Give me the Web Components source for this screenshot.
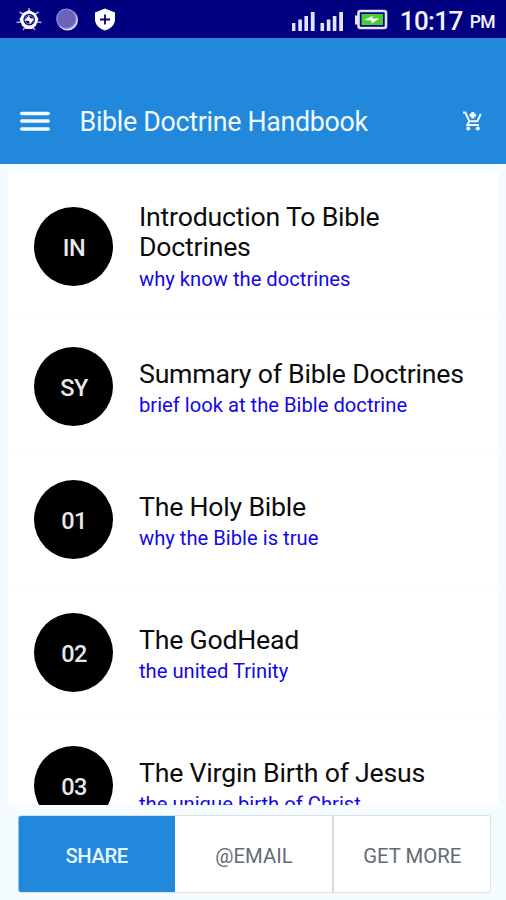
<!DOCTYPE html>
<html lang="en">
<head>
<meta charset="utf-8">
<title>Bible Doctrine Handbook</title>
<style>
  body {
    margin: 0;
    font-family: Roboto, sans-serif;
  }
</style>
</head>
<body>
<handbook-app>
  <status-bar slot="top" time="10:17" period="PM"></status-bar>
  <app-header slot="top">Bible Doctrine Handbook</app-header>
  <chapter-item badge="IN" tall>Introduction To Bible Doctrines<span slot="sub">why know the doctrines</span></chapter-item>
  <chapter-item badge="SY">Summary of Bible Doctrines<span slot="sub">brief look at the Bible doctrine</span></chapter-item>
  <chapter-item badge="01">The Holy Bible<span slot="sub">why the Bible is true</span></chapter-item>
  <chapter-item badge="02">The GodHead<span slot="sub">the united Trinity</span></chapter-item>
  <chapter-item badge="03">The Virgin Birth of Jesus<span slot="sub">the unique birth of Christ</span></chapter-item>
  <action-button slot="actions" active>SHARE</action-button>
  <action-button slot="actions">@EMAIL</action-button>
  <action-button slot="actions" divided>GET MORE</action-button>
</handbook-app>

<script>
class HandbookApp extends HTMLElement {
  constructor() {
    super();
    this.attachShadow({ mode: 'open' });
    this.shadowRoot.innerHTML = `
      <style>
        :host {
          display: flex;
          flex-direction: column;
          height: 900px;
          width: 506px;
          overflow: hidden;
          background: #f4fcff;
        }

        .list {
          flex: 1;
          min-height: 0;
          margin: 8px 7px 0 8px;
          overflow: hidden;
          background: #fff;
        }

        .actions {
          display: flex;
          box-sizing: border-box;
          height: 78px;
          margin: 10px 15px 7px 18px;
          border: 1px solid #dbe1e5;
          border-left-color: #8fc3ec;
          border-radius: 3px;
          overflow: hidden;
          background: #fff;
        }
      </style>
      <slot name="top"></slot>
      <div class="list"><slot></slot></div>
      <div class="actions"><slot name="actions"></slot></div>
    `;
  }
}

class StatusBar extends HTMLElement {
  constructor() {
    super();
    this.attachShadow({ mode: 'open' });
    this.shadowRoot.innerHTML = `
      <style>
        :host {
          display: flex;
          align-items: center;
          justify-content: space-between;
          box-sizing: border-box;
          height: 38px;
          flex: none;
          padding: 0 11px 0 16px;
          background: #000080;
          color: #f4f4ff;
        }

        svg {
          display: block;
        }

        .left, .right {
          display: flex;
          align-items: center;
        }

        .right {
          padding-top: 3px;
        }

        .clock {
          margin-left: 12px;
          font-size: 26px;
          font-weight: 500;
          letter-spacing: -0.6px;
          line-height: 30px;
          white-space: nowrap;
        }

        .period {
          margin: 3px 0 0 7px;
          font-size: 17.5px;
          font-weight: 500;
          letter-spacing: -0.6px;
        }
      </style>
      <div class="left">
        <svg width="102" height="38" viewBox="0 0 102 38">
          <g stroke="#a9a9e0" stroke-width="1.500">
            <path d="M13 8v4M3.500 12l4 2.500M22.500 12l-4 2.500M.5 22.500l5-.5M25.500 22.500l-5-.5M7 30l3-4M19 30l-3-4"/>
          </g>
          <path fill="#fff" d="M13 10l6 3 3.500 6-2.500 6.500-4 3.500H10l-4-3.500L3.500 19 7 13z"/>
          <circle cx="13.200" cy="19.600" r="5.800" fill="#000080"/>
          <circle cx="13.200" cy="19.600" r="4.200" fill="none" stroke="#8f8fd0" stroke-width="1"/>
          <path fill="#fff" d="M8.500 20.500l4.500-5 1 2.500 4 1-4 5-1-3z"/>
          <circle cx="51.500" cy="20" r="10.500" fill="#dcdcfa"/>
          <circle cx="50.400" cy="18.700" r="10" fill="#6a63b8"/>
          <circle cx="50.400" cy="18.700" r="9.600" fill="none" stroke="#8d88cf" stroke-width="1.300"/>
          <path fill="#fff" d="M89 8.500l10 4v7c0 5-4 9-10 11-6-2-10-6-10-11v-7z"/>
          <path stroke="#000080" stroke-width="1.800" d="M89 14.500v10M84 19.500h10"/>
        </svg>
      </div>
      <div class="right">
        <svg width="97" height="30" viewBox="0 0 97 30">
          <g fill="#e4e4ff">
            <path d="M1 17h3.400v8H1zM7.300 13.500h3.600v11.500H7.300zM13.400 10h3.600v15h-3.600zM19.800 6h3.800v19h-3.800z"/>
            <path d="M29.500 17h3.600v8h-3.600zM35.800 13.500h3.600v11.500h-3.600zM41.800 10h3.600v15h-3.600zM48.200 6h3.800v19h-3.800z"/>
          </g>
          <rect x="67.500" y="5" width="27.500" height="17" rx="2" fill="none" stroke="#e4e4ff" stroke-width="2.600"/>
          <path fill="#e4e4ff" d="M64 9.500h3v9h-3z"/>
          <rect x="70.500" y="8" width="21.500" height="11" fill="#45cf32"/>
          <path fill="#fff" d="M73 14l8.500-4v2.500h7l-8 5v-3z"/>
        </svg>
        <div class="clock"></div>
        <div class="period"></div>
      </div>
    `;
  }

  connectedCallback() {
    this.shadowRoot.querySelector('.clock').textContent = this.getAttribute('time');
    this.shadowRoot.querySelector('.period').textContent = this.getAttribute('period');
  }
}

class AppHeader extends HTMLElement {
  constructor() {
    super();
    this.attachShadow({ mode: 'open' });
    this.shadowRoot.innerHTML = `
      <style>
        :host {
          display: flex;
          align-items: center;
          box-sizing: border-box;
          height: 126px;
          flex: none;
          padding: 41px 23px 0 20px;
          background: #2288dc;
          color: #f1faff;
        }

        .title {
          flex: 1;
          margin-left: 29.5px;
          font-size: 26.8px;
          letter-spacing: -0.31px;
          line-height: 32px;
          white-space: nowrap;
        }

        .cart {
          margin: -1px 1px 0 0;
        }
      </style>
      <svg width="30" height="22" viewBox="0 0 30 22">
        <path stroke="#f1faff" stroke-width="3.400" stroke-linecap="round" d="M1.700 2.500h26.600M1.700 10h26.600M1.700 18h26.600"/>
      </svg>
      <div class="title"><slot></slot></div>
      <svg class="cart" width="20" height="20" viewBox="0 0 20 20" fill="none" stroke="#f1faff">
        <path stroke-width="2" d="M1 1.500h2.300l4 8.800h8L18.800 3M7.300 10.300L5.300 14H17"/>
        <path stroke-width="3" d="M10.800 1v6.500M7.500 4.200h6.600"/>
        <circle cx="6.300" cy="17.500" r="2" fill="#f1faff" stroke="none"/>
        <circle cx="15.800" cy="17.500" r="2" fill="#f1faff" stroke="none"/>
      </svg>
    `;
  }
}

class ChapterItem extends HTMLElement {
  constructor() {
    super();
    this.attachShadow({ mode: 'open' });
    this.shadowRoot.innerHTML = `
      <style>
        :host {
          display: flex;
          align-items: center;
          box-sizing: border-box;
          height: 133px;
          padding: 0 24px 0 26px;
          border-bottom: 1px solid #f8fbfc;
        }

        :host([tall]) {
          height: 148px;
          padding-top: 1px;
        }

        .badge {
          display: flex;
          align-items: center;
          justify-content: center;
          box-sizing: border-box;
          flex: none;
          width: 79px;
          height: 79px;
          padding: 4px 0 0 1px;
          border-radius: 50%;
          background: #000;
          color: #e8e8e8;
          font-size: 23.5px;
          font-weight: 500;
          letter-spacing: -0.5px;
        }

        .text {
          margin-left: 26px;
          padding-top: 4px;
        }

        .title {
          color: #0c0c0c;
          font-size: 26.7px;
          letter-spacing: -0.22px;
          line-height: 30px;
        }

        .sub {
          margin-top: 3px;
          color: #1408e6;
          font-size: 20.2px;
          line-height: 26px;
          white-space: nowrap;
        }

        :host([tall]) .text {
          padding-top: 2px;
        }

        :host([tall]) .sub {
          margin-top: 4px;
        }
      </style>
      <div class="badge"></div>
      <div class="text">
        <div class="title"><slot></slot></div>
        <div class="sub"><slot name="sub"></slot></div>
      </div>
    `;
  }

  connectedCallback() {
    this.shadowRoot.querySelector('.badge').textContent = this.getAttribute('badge');
  }
}

class ActionButton extends HTMLElement {
  constructor() {
    super();
    this.attachShadow({ mode: 'open' });
    this.shadowRoot.innerHTML = `
      <style>
        :host {
          display: flex;
          flex: 1;
          align-items: center;
          justify-content: center;
          padding: 4px 0 0 1px;
          color: #626b73;
          font-size: 20.3px;
          letter-spacing: 0.03px;
          white-space: nowrap;
        }

        :host([divided]) {
          border-left: 2px solid #d5dade;
        }

        :host([active]) {
          padding: 4px 1px 0 0;
          background: #2288dc;
          color: #e6f5ff;
          font-weight: 500;
          letter-spacing: -0.4px;
        }
      </style>
      <slot></slot>
    `;
  }
}

customElements.define('handbook-app', HandbookApp);
customElements.define('status-bar', StatusBar);
customElements.define('app-header', AppHeader);
customElements.define('chapter-item', ChapterItem);
customElements.define('action-button', ActionButton);
</script>
</body>
</html>
